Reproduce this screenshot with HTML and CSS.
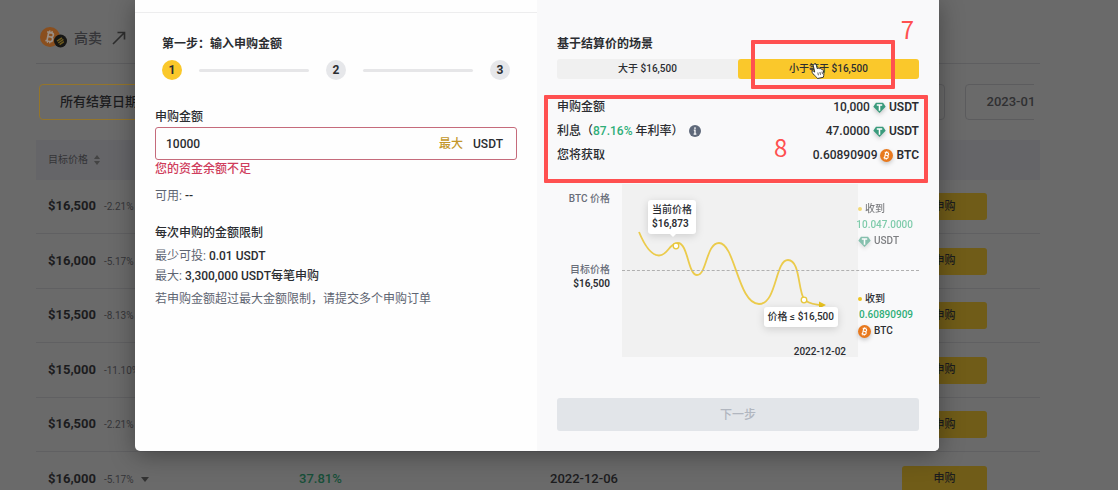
FILE: index.html
```html
<!DOCTYPE html>
<html lang="zh-CN">
<head>
    <meta charset="UTF-8">
    <meta name="viewport" content="width=device-width, initial-scale=1.0">
    <title>双币投资</title>
    <link rel="stylesheet" href="styles.css">
</head>
<body>
    <!-- shared icons -->
    <svg class="sprite" aria-hidden="true">
        <symbol id="icon-btc" viewBox="0 0 20 20">
            <circle cx="10" cy="10" r="10" fill="#e8791e"/>
            <g transform="rotate(12 10 10)" fill="none" stroke="#fff" stroke-width="1.7">
                <path d="M7.8 5.6v8.8M6.2 5.6h4.6a2.1 2.1 0 0 1 0 4.2H7.8M10.8 9.8a2.3 2.3 0 0 1 0 4.6H6.2"/>
                <path d="M8.6 3.6v2M10.9 3.6v2M8.6 14.4v2M10.9 14.4v2" stroke-width="1.3"/>
            </g>
        </symbol>
        <symbol id="icon-usdt" viewBox="0 0 20 20">
            <path d="M4.5 2.500h11L19.500 9 10 18.500.5 9z" fill="#3a9b7c"/>
            <path d="M5.800 5h8.400v2.200h-3v7.800H8.800V7.200h-3z" fill="#fff"/>
        </symbol>
    </svg>

    <main class="page">
        <div class="product">
            <span class="pair">
                <svg class="pair-icon" viewBox="0 0 28 22" aria-hidden="true">
                    <circle cx="10" cy="10" r="10" fill="#8a4f1e"/>
                    <g transform="rotate(12 10 10)" fill="none" stroke="#9b8f85" stroke-width="1.7">
                        <path d="M7.8 5.6v8.8M6.2 5.6h4.6a2.1 2.1 0 0 1 0 4.2H7.8M10.8 9.8a2.3 2.3 0 0 1 0 4.6H6.2"/>
                        <path d="M8.6 3.6v2M10.9 3.6v2M8.6 14.4v2M10.9 14.4v2" stroke-width="1.3"/>
                    </g>
                    <circle cx="20.500" cy="14" r="6.500" fill="#161614"/>
                    <path d="M17 14.2l5-3.400M18.200 16l5.200-3.600M19.600 17.600l4.200-2.900" stroke="#6f5b1f" stroke-width="1.500"/>
                </svg>
            </span>
            <span class="product-name">高卖</span>
            <svg class="arrow" viewBox="0 0 14 14" aria-hidden="true">
                <path d="M1 13L12 2M5.500 1.500h7v7" fill="none" stroke="#2d2d2d" stroke-width="1.600"/>
            </svg>
        </div>

        <div class="dates">
            <button class="date active">所有结算日期</button>
            <button class="date">2022-12-02</button>
            <button class="date">2022-12-06</button>
            <button class="date">2022-12-09</button>
            <button class="date">2022-12-16</button>
            <button class="date">2022-12-23</button>
            <button class="date">2022-12-30</button>
            <button class="date">2023-01-27</button>
        </div>

        <table class="offers">
            <thead>
                <tr>
                    <th>目标价格
                        <svg class="sort" viewBox="0 0 6 10" aria-hidden="true"><path d="M0 4l3-4 3 4zM0 6l3 4 3-4z" fill="#444"/></svg>
                    </th>
                    <th>年利率</th>
                    <th>结算日期</th>
                    <th></th>
                </tr>
            </thead>
            <tbody>
                <tr>
                    <td><b>$16,500</b><small>-2.21%</small></td>
                    <td class="rate">87.16%</td>
                    <td>2022-12-02</td>
                    <td><button class="buy">申购</button></td>
                </tr>
                <tr>
                    <td><b>$16,000</b><small>-5.17%</small></td>
                    <td class="rate">37.81%</td>
                    <td>2022-12-02</td>
                    <td><button class="buy">申购</button></td>
                </tr>
                <tr>
                    <td><b>$15,500</b><small>-8.13%</small></td>
                    <td class="rate">37.81%</td>
                    <td>2022-12-02</td>
                    <td><button class="buy">申购</button></td>
                </tr>
                <tr>
                    <td><b>$15,000</b><small>-11.10%</small></td>
                    <td class="rate">37.81%</td>
                    <td>2022-12-02</td>
                    <td><button class="buy">申购</button></td>
                </tr>
                <tr>
                    <td><b>$16,500</b><small>-2.21%</small></td>
                    <td class="rate">37.81%</td>
                    <td>2022-12-06</td>
                    <td><button class="buy">申购</button></td>
                </tr>
                <tr>
                    <td><b>$16,000</b><small>-5.17%</small><i class="caret"></i></td>
                    <td class="rate">37.81%</td>
                    <td>2022-12-06</td>
                    <td><button class="buy">申购</button></td>
                </tr>
            </tbody>
        </table>
    </main>

    <div class="overlay">
        <div class="modal" role="dialog" aria-label="申购">
            <section class="pane form-pane">
                <div class="pane-head"></div>
                <div class="pane-body">
                    <div class="steps-box">
                        <h2>第一步：输入申购金额</h2>
                        <ol class="steps">
                            <li class="step current">1</li>
                            <li class="bar"></li>
                            <li class="step">2</li>
                            <li class="bar"></li>
                            <li class="step">3</li>
                        </ol>
                    </div>

                    <label class="label" for="amount">申购金额</label>
                    <div class="field">
                        <input id="amount" type="text" value="10000">
                        <button class="max">最大</button>
                        <span>USDT</span>
                    </div>
                    <p class="error">您的资金余额不足</p>
                    <p class="available">可用: <b>--</b></p>

                    <div class="limits">
                        <h3>每次申购的金额限制</h3>
                        <p>最少可投: <b>0.01 USDT</b></p>
                        <p>最大: <b>3,300,000 USDT每笔申购</b></p>
                        <p class="note">若申购金额超过最大金额限制，请提交多个申购订单</p>
                    </div>
                </div>
            </section>

            <section class="pane result-pane">
                <h2>基于结算价的场景</h2>
                <div class="tabs">
                    <button class="tab">大于 $16,500</button>
                    <button class="tab selected">小于等于 $16,500
                        <svg class="cursor" viewBox="0 0 14 16" aria-hidden="true">
                            <path d="M3 1.200c1-.7 2 0 2.300 1l1 3.500c.5-.8 1.700-.8 2 .1.600-.6 1.700-.4 1.900.5.800-.4 1.800.1 2 1l.7 3c.3 1.800-.5 2.500-.6 4l-5.800 1.200c-.8-1.600-2.600-2.400-4.500-4.800-.7-.9-1.400-1.900-.8-2.500s1.700.1 2.500.9L2.300 2.800c-.2-.7.1-1.300.7-1.600z" fill="#fff" stroke="#333" stroke-width="1"/>
                            <path d="M6.800 9.500l.6 2.800M8.900 9l.6 2.800M11 8.600l.5 2.500" stroke="#333" stroke-width=".8"/>
                        </svg>
                    </button>
                </div>

                <dl class="summary">
                    <div>
                        <dt>申购金额</dt>
                        <dd>10,000 <svg class="coin"><use href="#icon-usdt"/></svg> <b>USDT</b></dd>
                    </div>
                    <div>
                        <dt>
                            <span>利息（<em>87.16%</em> 年利率）</span>
                            <svg class="info" viewBox="0 0 12 12" aria-hidden="true">
                                <circle cx="6" cy="6" r="6" fill="#5f697a"/>
                                <path d="M6 2.300v1.600M4.800 5.200H6v3.800M4.600 9.200h2.800" fill="none" stroke="#fff" stroke-width="1.300"/>
                            </svg>
                        </dt>
                        <dd>47.0000 <svg class="coin"><use href="#icon-usdt"/></svg> <b>USDT</b></dd>
                    </div>
                    <div>
                        <dt>您将获取</dt>
                        <dd>0.60890909 <svg class="coin"><use href="#icon-btc"/></svg> <b>BTC</b></dd>
                    </div>
                </dl>

                <div class="chart">
                    <div class="axis">
                        <span>BTC 价格</span>
                        <span>目标价格<b>$16,500</b></span>
                    </div>
                    <div class="plot">
                        <svg class="line" viewBox="0 0 236 173" aria-hidden="true">
                            <path d="M17 48C22 60 29 71.500 37 71.500C46 71.500 47 59 56 59C66 59 66 91 75 91C85 91 84 59 97 59C113 59 116 120 137 120C155 120 153 76 166 76C178 76 176 106 182 115C186 120 192 120 198 121" fill="none" stroke="#ebcb4c" stroke-width="1.800"/>
                            <path d="M197 117.500l7 3.500-7 3.500z" fill="#e8c21f"/>
                            <circle cx="54" cy="62" r="2.800" fill="#fff" stroke="#e8c83c" stroke-width="1.300"/>
                            <circle cx="182" cy="116" r="2.800" fill="#fff" stroke="#e8c83c" stroke-width="1.300"/>
                        </svg>
                        <div class="tip tip-now">当前价格<b>$16,873</b></div>
                        <div class="tip tip-settle">价格 ≤ $16,500</div>
                        <time>2022-12-02</time>
                    </div>
                    <div class="outcomes">
                        <div class="outcome faded">
                            <span class="got">收到</span>
                            <em>10.047.0000</em>
                            <span class="asset"><svg class="coin"><use href="#icon-usdt"/></svg>USDT</span>
                        </div>
                        <div class="outcome">
                            <span class="got">收到</span>
                            <em>0.60890909</em>
                            <span class="asset"><svg class="coin"><use href="#icon-btc"/></svg>BTC</span>
                        </div>
                    </div>
                    <div class="target-line"></div>
                </div>

                <button class="next" disabled>下一步</button>
            </section>

            <div class="mark mark-tab"><span>7</span></div>
            <div class="mark mark-summary"><span>8</span></div>
        </div>
    </div>
</body>
</html>
```

FILE: styles.css
```css
* {
    margin: 0;
    padding: 0;
    box-sizing: border-box;
}

body {
    font-family: Roboto, "Noto Sans CJK SC", sans-serif;
    font-size: 12px;
    font-weight: 500;
    line-height: 20px;
    color: #2b2d31;
    background-color: #6a6a6a;
    height: 100vh;
    overflow: hidden;
}

button {
    font: inherit;
    color: inherit;
    border: none;
    background: none;
    cursor: pointer;
}

svg {
    flex-shrink: 0;
}

em {
    font-style: normal;
    color: #2fae78;
}

.sprite {
    display: none;
}

/* dimmed page behind the dialog */
.page {
    padding: 0 78px 0 36px;
    font-size: 13px;
    color: #1c1c1e;
}

.product {
    display: flex;
    align-items: center;
    height: 64px;
    padding: 12px 4px 0;
    border-bottom: 1px solid #5e5e60;
}

.pair {
    display: flex;
}

.pair-icon {
    width: 28px;
    height: 22px;
}

.product-name {
    margin: 0 10px 0 6px;
    color: #363639;
    font-size: 14px;
}

.arrow {
    width: 14px;
    height: 14px;
}

.dates {
    display: flex;
    gap: 20px;
    margin: 20px 6px 20px 3px;
    overflow: hidden;
}

.date {
    flex: 0 0 111px;
    height: 36px;
    border: 1px solid #5c5c5e;
    border-radius: 4px;
    color: #303032;
}

.date.active {
    flex-basis: 120px;
    border: 1px solid #94752a;
    color: #1c1c1e;
}

.offers {
    width: 100%;
    table-layout: fixed;
    border-collapse: separate;
    border-spacing: 0;
}

.offers th {
    height: 40px;
    padding: 0 12px;
    background-color: #656568;
    color: #343437;
    font-size: 10px;
    font-weight: 400;
    text-align: left;
}

.sort {
    width: 6px;
    height: 10px;
    margin-left: 4px;
    vertical-align: middle;
}

.offers td {
    height: 54px;
    padding: 0 12px;
    border-bottom: 1px solid #606062;
}

.offers tr:nth-child(even) td {
    height: 55px;
}

.offers td:last-child {
    padding-right: 53px;
    text-align: right;
}

.offers b {
    font-weight: 700;
}

.offers small {
    margin-left: 8px;
    color: #353538;
    font-size: 10px;
    font-weight: 400;
}

.offers .rate {
    color: #174f38;
}

.caret {
    display: inline-block;
    margin-left: 7px;
    border: 4px solid transparent;
    border-top: 5px solid #333;
    border-bottom: 0;
    vertical-align: middle;
}

.buy {
    width: 85px;
    height: 27px;
    border-radius: 3px;
    background-color: #705c18;
    font-size: 11px;
    vertical-align: middle;
}

/* dialog */
.overlay {
    position: absolute;
    top: 0;
    left: 0;
    right: 0;
    display: flex;
    justify-content: center;
    padding: 0 44px 0 0;
}

.modal {
    position: relative;
    display: flex;
    width: 100%;
    max-width: 804px;
    border-radius: 0 0 5px 5px;
    box-shadow: 0 4px 24px rgba(0, 0, 0, 0.35);
    background-color: #fefefe;
}

.pane {
    width: 50%;
}

.pane-head {
    height: 13px;
    border-bottom: 1px solid #ededee;
}

.pane-body {
    padding: 21px 20px;
}

h2,
h3 {
    font-size: 12px;
    font-weight: 600;
}

.steps-box {
    padding: 0 7px;
}

.steps {
    display: flex;
    align-items: center;
    gap: 17px;
    margin-top: 6px;
    list-style: none;
}

.step {
    width: 20px;
    height: 20px;
    border-radius: 50%;
    background-color: #e6e7ea;
    font-weight: 700;
    text-align: center;
}

.step.current {
    background-color: #fac82b;
}

.bar {
    flex: 1;
    height: 3px;
    border-radius: 2px;
    background-color: #e6e6e8;
}

.label {
    display: block;
    margin-top: 27px;
}

.field {
    display: flex;
    align-items: center;
    gap: 10px;
    height: 33px;
    padding: 0 13px 0 10px;
    border: 1px solid #c56b7b;
    border-radius: 3px;
}

.field input {
    flex: 1;
    min-width: 0;
    border: none;
    outline: none;
    background: none;
    font: inherit;
    color: inherit;
}

.max {
    color: #c3972a;
}

.error {
    line-height: 18px;
    color: #cf3d5c;
}

.available {
    margin-top: 8px;
    color: #5f6572;
    font-weight: 400;
}

.limits {
    margin-top: 17px;
    color: #5f6572;
    font-weight: 400;
}

.limits h3 {
    margin-bottom: 3px;
    color: #2b2d31;
    font-weight: 500;
}

.limits b,
.available b {
    color: #2b2d31;
    font-weight: 500;
}

.note {
    margin-top: 3px;
}

.result-pane {
    padding: 34px 20px 20px;
    border-radius: 0 0 5px 0;
    background-color: #f9f9fa;
}

.tabs {
    display: flex;
    margin-top: 5px;
    border-radius: 3px;
    background-color: #f0f0f0;
}

.tab {
    position: relative;
    flex: 1;
    height: 20px;
    border-radius: 3px;
    font-size: 10px;
}

.tab.selected {
    background-color: #fac82b;
}

.cursor {
    position: absolute;
    left: 73px;
    top: 4px;
    width: 14px;
    height: 16px;
}

.summary {
    margin-top: 16px;
    line-height: 24px;
}

.summary div,
.summary dt,
.summary dd {
    display: flex;
    align-items: center;
}

.summary div {
    justify-content: space-between;
    height: 24px;
}

.summary dd {
    gap: 3px;
}

.summary b {
    font-weight: 600;
}

.info {
    width: 12px;
    height: 12px;
    margin-left: 6px;
}

.coin {
    width: 13px;
    height: 13px;
    filter: drop-shadow(0 2px 2px rgba(0, 0, 0, 0.2));
}

.chart {
    position: relative;
    display: flex;
    height: 173px;
    margin-top: 17px;
    font-size: 10px;
    line-height: 14px;
}

.axis {
    display: flex;
    flex-direction: column;
    gap: 57px;
    width: 65px;
    padding: 8px 12px 0 0;
    color: #686d78;
    text-align: right;
}

.axis b,
.tip b {
    display: block;
    color: #2b2d31;
    font-weight: 600;
}

.plot {
    position: relative;
    flex: 1;
    background-color: #f1f1f1;
}

.line {
    display: block;
    width: 100%;
    height: 173px;
}

.tip {
    position: absolute;
    padding: 3px 4px;
    border-radius: 3px;
    background-color: #fff;
    box-shadow: 0 2px 8px rgba(0, 0, 0, 0.15);
    white-space: nowrap;
}

.tip-now {
    left: 26px;
    top: 16px;
}

.tip-now::after {
    content: "";
    position: absolute;
    left: 22px;
    top: 100%;
    border: 3px solid transparent;
    border-top-color: #fff;
}

.tip-settle {
    right: 20px;
    top: 123px;
}

.plot time {
    position: absolute;
    right: 12px;
    bottom: -2px;
}

.outcomes {
    display: flex;
    flex-direction: column;
    gap: 44px;
    width: 61px;
    padding-top: 18px;
}

.outcome {
    display: flex;
    flex-direction: column;
    gap: 2px;
}

.outcome em {
    align-self: flex-end;
    margin-right: 6px;
}

.outcome.faded {
    opacity: 0.6;
}

.got,
.asset {
    display: flex;
    align-items: center;
    gap: 3px;
}

.got::before {
    content: "";
    width: 4px;
    height: 4px;
    border-radius: 50%;
    background-color: #eec31e;
}

.target-line {
    position: absolute;
    left: 65px;
    right: 0;
    top: 86px;
    border-top: 1px dashed #b0b0b0;
}

.next {
    display: block;
    width: 100%;
    height: 33px;
    margin-top: 41px;
    border-radius: 3px;
    background-color: #e2e5e9;
    color: #b1b6bf;
}

/* numbered callouts over the dialog */
.mark {
    position: absolute;
    border: 4px solid #ff5050;
    border-radius: 1px;
    color: #ff5050;
    font: 400 24px/24px "Noto Sans CJK SC", sans-serif;
    pointer-events: none;
}

.mark span {
    position: absolute;
}

.mark-tab {
    right: 44px;
    top: 40px;
    width: 144px;
    height: 49px;
}

.mark-tab span {
    right: -23px;
    top: -27px;
}

.mark-summary {
    right: 11px;
    top: 95px;
    width: 384px;
    height: 88px;
}

.mark-summary span {
    left: 226px;
    top: 36px;
}
```
